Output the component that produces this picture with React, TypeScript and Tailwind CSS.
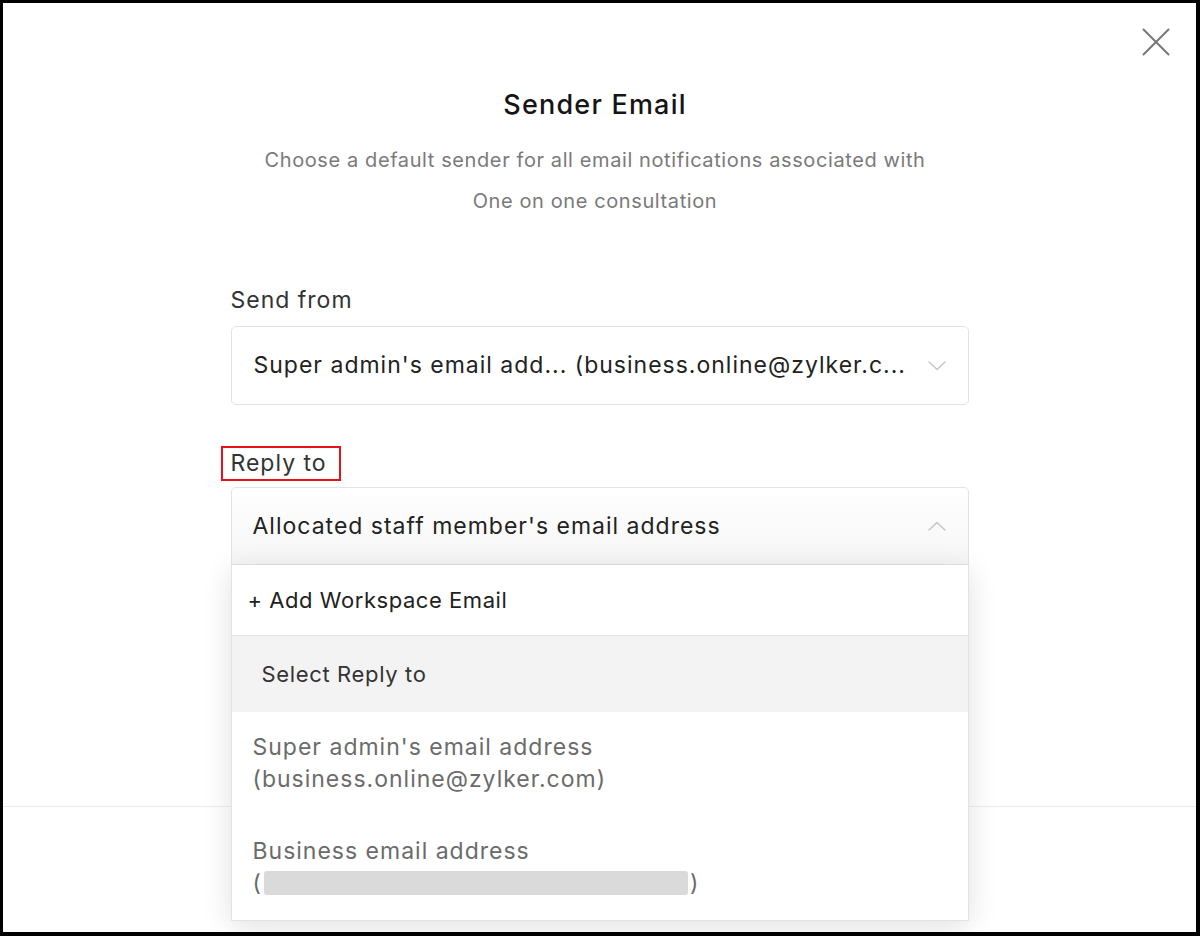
import { X } from "lucide-react";

const font = { fontFamily: "Inter, 'Noto Sans', sans-serif" };

function Chevron({ up }: { up?: boolean }) {
  return (
    <svg width="18" height="10" viewBox="0 0 18 10" fill="none" className="shrink-0">
      <polyline
        points={up ? "1,9 9,1.5 17,9" : "1,1 9,8.5 17,1"}
        stroke="#c4c4c4"
        strokeWidth="1.4"
        strokeLinecap="round"
        strokeLinejoin="round"
      />
    </svg>
  );
}

export default function App() {
  return (
    <div className="w-[1200px] h-[936px] bg-black p-[3px] pr-[4px] pb-[4px]" style={font}>
      <div className="relative h-full w-full bg-white flex flex-col">
        <button className="absolute right-[15px] top-[14px] text-[#7a7a7a]">
          <X size={50} strokeWidth={1} />
        </button>

        <div className="h-[803px] shrink-0 flex flex-col items-center">
          <h1 className="mt-[86px] pr-[9px] text-[27px] leading-[32px] font-medium text-[#151515] tracking-[1.2px]">
            Sender Email
          </h1>
          <p className="mt-[19px] pr-[9px] text-center text-[20px] leading-[41px] tracking-[0.6px] text-[#7a7a7a]">
            Choose a default sender for all email notifications associated with
            <br />
            One on one consultation
          </p>

          <div className="w-[738px] mt-[63px] flex flex-col text-[23px] tracking-[1px]">
            <label className="leading-[30px] text-[#333]">Send from</label>
            <div className="mt-[11px] h-[79px] rounded-[5px] border border-[#e3e3e3] flex items-center justify-between pl-[22px] pr-[22px]">
              <span className="text-[#222]">
                Super admin's email add... (business.online@zylker.c...
              </span>
              <Chevron />
            </div>

            <div className="mt-[41px]">
              <span className="inline-block ml-[-10px] border-2 border-[#e8101a] pl-[8px] pr-[12px] leading-[31px] text-[#333]">
                Reply to
              </span>
            </div>

            <div className="relative mt-[6px]">
              <div className="h-[78px] rounded-t-[5px] border border-[#e3e3e3] bg-gradient-to-b from-white to-[#f6f6f6] flex items-center justify-between pl-[21px] pr-[22px]">
                <span className="text-[#222]">Allocated staff member's email address</span>
                <Chevron up />
              </div>

              <div className="absolute left-0 right-0 top-full z-10 bg-white border border-[#e3e3e3] border-t-0 shadow-[0_6px_28px_rgba(0,0,0,0.12)]">
                <div className="h-[71px] flex items-center pl-[16px] border-b border-[#e3e3e3] text-[22px] tracking-[0.55px] text-[#222]">
                  + Add Workspace Email
                </div>
                <div className="h-[76px] flex items-center pl-[30px] bg-[#f3f3f3] text-[22px] tracking-[0.65px] text-[#333]">
                  Select Reply to
                </div>
                <div className="pl-[21px] pt-[19px] pb-[20px] leading-[32px] text-[#6b6b6b]">
                  Super admin's email address
                  <br />
                  (business.online@zylker.com)
                </div>
                <div className="pl-[21px] pt-[20px] pb-[21px] leading-[32px] text-[#6b6b6b]">
                  Business email address
                  <br />
                  <span className="inline-flex items-center">
                    (
                    <span className="inline-block w-[424px] h-[24px] mx-[2px] rounded-[3px] bg-[#dadada]" />
                    )
                  </span>
                </div>
              </div>
            </div>
          </div>
        </div>

        <div className="flex-1 border-t border-[#ececec]" />
      </div>
    </div>
  );
}
